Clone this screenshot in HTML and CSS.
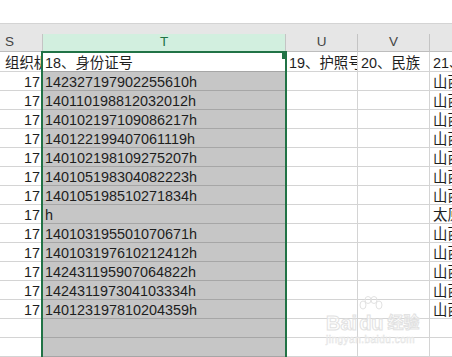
FILE: index.html
```html
<!DOCTYPE html>
<html lang="zh-CN">
<head>
    <meta charset="UTF-8">
    <meta name="viewport" content="width=device-width, initial-scale=1.0">
    <title>身份证号</title>
    <link rel="stylesheet" href="styles.css">
</head>
<body>

    <div class="window">
        <div class="formula-space"></div>
        <div class="header-band"></div>

        <div class="sheet">
            <!-- column headers -->
            <div class="col-head col-s">S</div>
            <div class="col-head active">T</div>
            <div class="col-head">U</div>
            <div class="col-head">V</div>
            <div class="col-head last"></div>

            <!-- row 1: titles -->
            <div class="cell title first">组织机构代码</div>
            <div class="cell title current">18、身份证号</div>
            <div class="cell title">19、护照号码</div>
            <div class="cell title">20、民族</div>
            <div class="cell title last">21、户籍所在地</div>

            <div class="cell num">17</div>
            <div class="cell sel">142327197902255610h</div>
            <div class="cell"></div><div class="cell"></div>
            <div class="cell last">山西省</div>

            <div class="cell num">17</div>
            <div class="cell sel">140110198812032012h</div>
            <div class="cell"></div><div class="cell"></div>
            <div class="cell last">山西省</div>

            <div class="cell num">17</div>
            <div class="cell sel">140102197109086217h</div>
            <div class="cell"></div><div class="cell"></div>
            <div class="cell last">山西省</div>

            <div class="cell num">17</div>
            <div class="cell sel">140122199407061119h</div>
            <div class="cell"></div><div class="cell"></div>
            <div class="cell last">山西省</div>

            <div class="cell num">17</div>
            <div class="cell sel">140102198109275207h</div>
            <div class="cell"></div><div class="cell"></div>
            <div class="cell last">山西省</div>

            <div class="cell num">17</div>
            <div class="cell sel">140105198304082223h</div>
            <div class="cell"></div><div class="cell"></div>
            <div class="cell last">山西省</div>

            <div class="cell num">17</div>
            <div class="cell sel">140105198510271834h</div>
            <div class="cell"></div><div class="cell"></div>
            <div class="cell last">山西省</div>

            <div class="cell num">17</div>
            <div class="cell sel">h</div>
            <div class="cell"></div><div class="cell"></div>
            <div class="cell last">太原市</div>

            <div class="cell num">17</div>
            <div class="cell sel">140103195501070671h</div>
            <div class="cell"></div><div class="cell"></div>
            <div class="cell last">山西省</div>

            <div class="cell num">17</div>
            <div class="cell sel">140103197610212412h</div>
            <div class="cell"></div><div class="cell"></div>
            <div class="cell last">山西省</div>

            <div class="cell num">17</div>
            <div class="cell sel">142431195907064822h</div>
            <div class="cell"></div><div class="cell"></div>
            <div class="cell last">山西省</div>

            <div class="cell num">17</div>
            <div class="cell sel">142431197304103334h</div>
            <div class="cell"></div><div class="cell"></div>
            <div class="cell last">山西省</div>

            <div class="cell num">17</div>
            <div class="cell sel">140123197810204359h</div>
            <div class="cell"></div><div class="cell"></div>
            <div class="cell last">山西省</div>

            <!-- empty rows -->
            <div class="cell"></div>
            <div class="cell sel"></div>
            <div class="cell"></div><div class="cell"></div>
            <div class="cell last"></div>

            <div class="cell"></div>
            <div class="cell sel"></div>
            <div class="cell"></div><div class="cell"></div>
            <div class="cell last"></div>

            <div class="cell"></div>
            <div class="cell sel"></div>
            <div class="cell"></div><div class="cell"></div>
            <div class="cell last"></div>
        </div>

        <!-- selected column outline -->
        <div class="selection"><span class="fill-handle"></span></div>

        <!-- site watermark -->
        <div class="watermark">
            <div class="wm-logo">
                <span>Bai</span>
                <span class="wm-du">du
                    <svg class="wm-paw" width="26" height="20" viewBox="0 0 26 20">
                        <ellipse cx="6" cy="9" rx="3" ry="4" />
                        <ellipse cx="11" cy="4" rx="3" ry="3.5" />
                        <ellipse cx="17" cy="4" rx="3" ry="3.5" />
                        <ellipse cx="22" cy="9" rx="3" ry="4" />
                    </svg>
                </span>
                <span class="wm-cn">经验</span>
            </div>
            <div class="wm-url">jingyan.baidu.com</div>
        </div>
    </div>

</body>
</html>
```

FILE: styles.css
```css
html, body {
    margin: 0;
    padding: 0;
    overflow: hidden;
    background-color: #fff;
}

body {
    font-family: 'Liberation Sans', 'Noto Sans CJK SC', sans-serif;
    color: #1e1e1e;
}

.window {
    position: relative;
    width: 452px;
    height: 357px;
    overflow: hidden;
}

.formula-space {
    height: 23px;
    background-color: #fff;
}

.header-band {
    height: 10px;
    border-top: 1px solid #d4d4d4;
    background-color: #e6e6e6;
}

.sheet {
    display: grid;
    grid-template-columns: 43px 243px 72px 72px 1fr;
    grid-template-rows: 18px 20px repeat(16, 19px);
}

.col-head {
    box-sizing: border-box;
    background-color: #e6e6e6;
    border-right: 1px solid #c4c4c4;
    border-bottom: 1px solid #bdbdbd;
    text-align: center;
    font-size: 13.5px;
    line-height: 16px;
    color: #444;
}

.col-head.col-s {
    text-align: left;
    padding-left: 5px;
}

.col-head.active {
    background-color: #d2efdf;
    color: #217346;
}

.col-head.last {
    border-right: none;
}

.cell {
    box-sizing: border-box;
    border-right: 1px solid #d4d4d4;
    border-bottom: 1px solid #d4d4d4;
    padding: 2px 2px 0 3px;
    font-size: 14.4px;
    line-height: 16px;
    white-space: nowrap;
    overflow: hidden;
}

.cell.title {
    padding-top: 3px;
}

.cell.first {
    padding-left: 5px;
}

.cell.current {
    padding-left: 2px;
    border-bottom-color: #a6a6a6;
}

.cell.num {
    text-align: right;
    padding-right: 2px;
}

.cell.sel {
    background-color: #c6c6c6;
    border-bottom-color: #a6a6a6;
    padding-left: 2px;
}

.cell.last {
    border-right: none;
}

.selection {
    position: absolute;
    left: 41px;
    top: 51px;
    width: 246px;
    height: 320px;
    box-sizing: border-box;
    border: 2px solid #217346;
    border-bottom: none;
}

.fill-handle {
    position: absolute;
    right: -2px;
    top: 0;
    width: 5px;
    height: 6px;
    background-color: #217346;
}

.watermark {
    position: absolute;
    left: 326px;
    top: 298px;
    color: rgba(255, 255, 255, 0.6);
    -webkit-text-stroke: 1px #e2e2e2;
}

.wm-logo {
    display: flex;
    align-items: flex-end;
    gap: 2px;
    font-size: 20px;
    font-weight: bold;
    line-height: 22px;
}

.wm-du {
    position: relative;
    padding-top: 14px;
}

.wm-paw {
    position: absolute;
    left: -2px;
    top: -2px;
    fill: none;
    stroke: #e2e2e2;
    stroke-width: 1;
}

.wm-cn {
    font-size: 16px;
    margin-left: 2px;
}

.wm-url {
    font-size: 10px;
    line-height: 12px;
    letter-spacing: 0.5px;
    -webkit-text-stroke: 0.5px #e2e2e2;
}
```
